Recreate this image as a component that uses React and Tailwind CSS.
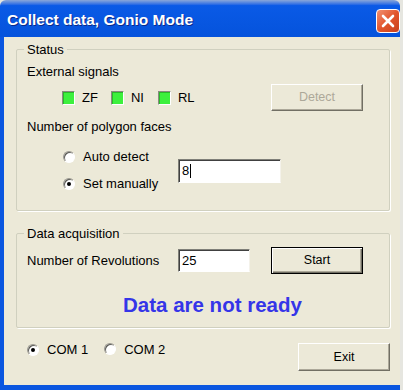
import React from "react";

const F = { fontFamily: '"Liberation Sans", Arial, sans-serif' };

function Radio({ checked }) {
  return (
    <span className="relative inline-flex h-[12px] w-[12px] shrink-0 items-center justify-center rounded-full border border-[#9a9890] border-b-white border-r-white bg-white shadow-[inset_1px_1px_0_#5a5a55]">
      {checked && <span className="h-[4px] w-[4px] rounded-full bg-black" />}
    </span>
  );
}

function Led({ label, className = "" }) {
  return (
    <div className={"flex items-center " + className}>
      <span className="h-[14px] w-[13px] border border-[#8a8a80] border-b-white border-r-white bg-[#3df03d] shadow-[inset_1px_1px_0_#2ab82a]" />
      <span className="ml-[7px] text-[13px] leading-[14px] text-black">{label}</span>
    </div>
  );
}

function Button({ children, disabled, isDefault, className = "" }) {
  return (
    <div
      className={
        "flex items-center justify-center text-[12.5px] " +
        (isDefault
          ? "border border-black bg-[#ECE9D8] shadow-[inset_1px_1px_0_#ffffff,inset_-1px_-1px_0_#716F64,inset_-2px_-2px_0_#ACA899] "
          : "border border-t-white border-l-white border-b-[#716F64] border-r-[#716F64] bg-[#ECE9D8] shadow-[inset_-1px_-1px_0_#ACA899] ") +
        (disabled ? "text-[#ACA899] " : "text-black ") +
        className
      }
    >
      {children}
    </div>
  );
}

function Input({ value, className = "", cursor }) {
  return (
    <div
      className={
        "flex items-center border border-t-[#7f7f78] border-l-[#7f7f78] border-b-white border-r-[#f4f2ea] bg-white pl-[3px] text-[13px] leading-[14px] text-black shadow-[inset_1px_1px_0_#404040] " +
        className
      }
    >
      <span>{value}</span>
      {cursor && <span className="ml-[1px] h-[14px] w-[1px] bg-black" />}
    </div>
  );
}

function Group({ title, className = "", children }) {
  return (
    <div className={"relative border border-[#D0D0BF] shadow-[1px_1px_0_#ffffff] rounded-[2px] " + className}>
      <span className="absolute left-[7px] top-[-8px] bg-[#ECE9D8] px-[3px] text-[13px] leading-[15px] text-black">
        {title}
      </span>
      {children}
    </div>
  );
}

export default function App() {
  return (
    <div className="h-[390px] w-[403px] overflow-hidden bg-[#E6E6E0]" style={F}>
      <div className="flex h-[390px] w-[400px] flex-col">
        {/* Title bar */}
        <div className="flex h-[37px] shrink-0 items-center justify-between rounded-t-[6px] bg-gradient-to-b from-[#8aa6d8] via-[#0a5ae6] via-15% to-[#0553dc] pl-[7px]">
          <span
            className="mt-[3px] text-[15.5px] font-bold text-white"
            style={{ textShadow: "1px 1px 0 #0a2a8a" }}
          >
            Collect data, Gonio Mode
          </span>
          <div className="mt-[4px] flex h-[24px] w-[24px] items-center justify-center rounded-[4px] border border-white bg-gradient-to-br from-[#f09070] via-[#e2552c] to-[#c8401c]">
            <svg width="14" height="14" viewBox="0 0 14 14">
              <path d="M2 2 L12 12 M12 2 L2 12" stroke="white" strokeWidth="2.6" strokeLinecap="round" />
            </svg>
          </div>
        </div>

        {/* Body */}
        <div className="flex flex-1 flex-col border-b-[5px] border-l-[4px] border-b-[#0a56e0] border-l-[#0a56e0] bg-[#ECE9D8] pl-[12px] pr-[10px] text-black">
          {/* Status */}
          <Group title="Status" className="mt-[12px] h-[162px] w-[374px] pl-[10px]">
            <div className="mt-[15px] text-[13px] leading-[14px]">External signals</div>
            <div className="mt-[5px] flex h-[27px] items-center">
              <Led label="ZF" className="ml-[35px]" />
              <Led label="NI" className="ml-[13px]" />
              <Led label="RL" className="ml-[14px]" />
              <Button disabled className="ml-auto mr-[26px] h-[27px] w-[92px]">
                Detect
              </Button>
            </div>
            <div className="mt-[9px] text-[13px] leading-[14px]">Number of polygon faces</div>
            <div className="mt-[13px] flex items-center">
              <div className="ml-[36px] flex w-[115px] flex-col gap-[7px]">
                <div className="flex h-[20px] items-center">
                  <Radio />
                  <span className="ml-[8px] text-[13px] leading-[14px]">Auto detect</span>
                </div>
                <div className="flex h-[20px] items-center">
                  <Radio checked />
                  <span className="ml-[8px] text-[13px] leading-[14px]">Set manually</span>
                </div>
              </div>
              <Input value="8" cursor className="h-[24px] w-[103px]" />
            </div>
          </Group>

          {/* Data acquisition */}
          <Group title="Data acquisition" className="mt-[22px] h-[95px] w-[374px] pl-[10px]">
            <div className="mt-[13px] flex h-[27px] items-center">
              <span className="w-[151px] text-[13px] leading-[14px]">Number of Revolutions</span>
              <Input value="25" className="h-[23px] w-[72px]" />
              <Button isDefault className="ml-[21px] h-[27px] w-[92px]">
                Start
              </Button>
            </div>
            <div className="ml-[96px] mt-[20px] text-[20.5px] font-bold leading-[22px] text-[#3535E8]">
              Data are not ready
            </div>
          </Group>

          {/* Bottom */}
          <div className="mt-[15px] flex w-[374px] items-start pl-[11px]">
            <div className="flex h-[14px] items-center">
              <Radio checked />
              <span className="ml-[8px] text-[13px] leading-[14px]">COM 1</span>
              <span className="ml-[16px]">
                <Radio />
              </span>
              <span className="ml-[8px] text-[13px] leading-[14px]">COM 2</span>
            </div>
            <Button className="ml-auto h-[28px] w-[92px]">Exit</Button>
          </div>
        </div>
      </div>
    </div>
  );
}
